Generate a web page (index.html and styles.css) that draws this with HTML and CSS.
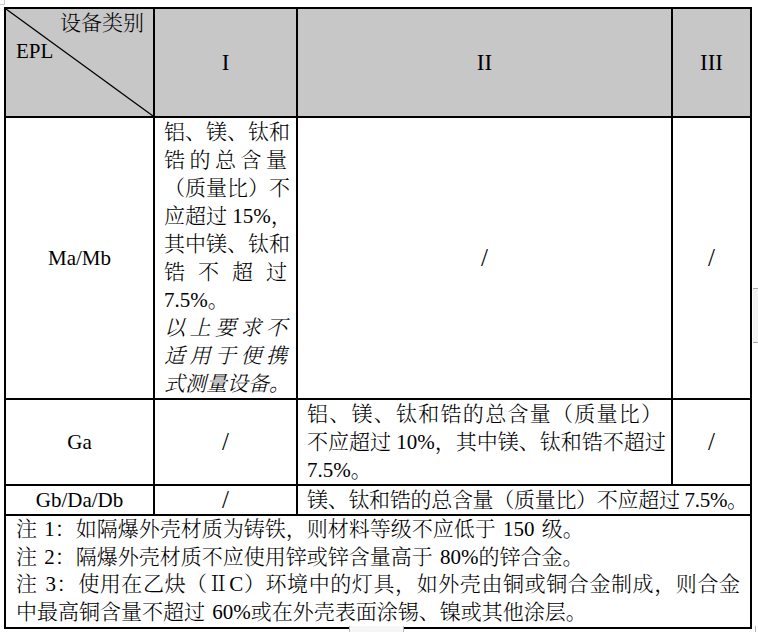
FILE: index.html
```html
<!DOCTYPE html>
<html lang="zh-CN">
<head>
<meta charset="utf-8">
<title>EPL 设备类别 材料要求</title>
<link rel="stylesheet" href="styles.css">
</head>
<body>
<div class="page">
  <table class="spec">
    <colgroup>
      <col class="c1"><col class="c2"><col class="c3"><col class="c4">
    </colgroup>
    <tr class="r-head">
      <th class="diag">
        <svg class="slash" viewBox="0 0 100 100" preserveAspectRatio="none" aria-hidden="true">
          <line x1="0" y1="0" x2="100" y2="100" vector-effect="non-scaling-stroke"></line>
        </svg>
        <div class="dh-top">设备类别</div>
        <div class="dh-bot">EPL</div>
      </th>
      <th class="roman">I</th>
      <th class="roman">II</th>
      <th class="roman">III</th>
    </tr>
    <tr class="r-m">
      <td class="lbl">Ma/Mb</td>
      <td class="txt">
        <span class="ln j">铝、镁、钛和</span>
        <span class="ln j">锆的总含量</span>
        <span class="ln j">（质量比）不</span>
        <span class="ln j">应超过 15%，</span>
        <span class="ln j">其中镁、钛和</span>
        <span class="ln j">锆不超过</span>
        <span class="ln">7.5%。</span>
        <span class="ln j it">以上要求不</span>
        <span class="ln j it">适用于便携</span>
        <span class="ln j it">式测量设备。</span>
      </td>
      <td class="na">/</td>
      <td class="na">/</td>
    </tr>
    <tr class="r-ga">
      <td class="lbl">Ga</td>
      <td class="na">/</td>
      <td class="txt">
        <span class="ln j">铝、镁、钛和锆的总含量（质量比）</span>
        <span class="ln j">不应超过 10%，其中镁、钛和锆不超过</span>
        <span class="ln">7.5%。</span>
      </td>
      <td class="na">/</td>
    </tr>
    <tr class="r-gb">
      <td class="lbl">Gb/Da/Db</td>
      <td class="na">/</td>
      <td class="txt one" colspan="2">镁、钛和锆的总含量（质量比）不应超过 7.5%。</td>
    </tr>
    <tr class="r-note">
      <td class="notes" colspan="4">
        <span class="ln">注 1：如隔爆外壳材质为铸铁，则材料等级不应低于 150 级。</span>
        <span class="ln">注 2：隔爆外壳材质不应使用锌或锌含量高于 80%的锌合金。</span>
        <span class="ln j">注 3：使用在乙炔（ⅡC）环境中的灯具，如外壳由铜或铜合金制成，则合金</span>
        <span class="ln">中最高铜含量不超过 60%或在外壳表面涂锡、镍或其他涂层。</span>
      </td>
    </tr>
  </table>
  <span class="mark mark-tl"></span>
  <span class="mark mark-r"></span>
  <span class="mark mark-b"></span>
  <span class="mark mark-br"></span>
</div>
</body>
</html>
```

FILE: styles.css
```css
html, body {
  margin: 0;
  padding: 0;
  background: #ffffff;
}

.page {
  position: relative;
  width: 758px;
  height: 632px;
  padding: 7px 0 0 4px;
  box-sizing: border-box;
  overflow: hidden;
  font-family: "Liberation Serif", "Noto Serif CJK SC", "Noto Sans CJK SC", serif;
  font-size: 21px;
  font-weight: 300;
  line-height: 28px;
  color: #000;
}

.spec {
  border-collapse: collapse;
  table-layout: fixed;
  width: 748px;
}

.c1 { width: 149px; }
.c2 { width: 143px; }
.c3 { width: 375px; }
.c4 { width: 79px; }

.spec th,
.spec td {
  border: 2px solid #000;
  padding: 0 9px;
  font-weight: 300;
}

.r-head { height: 109px; }
.r-m { height: 282px; }
.r-ga { height: 85px; }
.r-gb { height: 29px; }
.r-note { height: 113px; }

.r-head th {
  background: #c7c7c7;
  vertical-align: middle;
  text-align: center;
}

.r-head th.diag {
  position: relative;
  vertical-align: top;
}

.slash {
  position: absolute;
  left: 0;
  top: 0;
  width: 100%;
  height: 100%;
  overflow: visible;
}

.slash line {
  stroke: #000;
  stroke-width: 1.3;
}

.dh-top {
  position: relative;
  text-align: right;
}

.dh-bot {
  position: relative;
  text-align: left;
  padding-left: 1px;
}

.roman {
  font-size: 23px;
}

.lbl {
  text-align: center;
  vertical-align: middle;
}

.na {
  text-align: center;
  vertical-align: middle;
  font-size: 25px;
}

.txt {
  vertical-align: top;
  text-align: left;
}

.spec td.txt.one {
  vertical-align: middle;
  white-space: nowrap;
  letter-spacing: -0.3px;
  padding-right: 0;
}

.ln {
  display: block;
  white-space: nowrap;
}

.ln.j {
  text-align: justify;
  text-align-last: justify;
}

.it {
  font-style: italic;
}

.spec td.notes {
  vertical-align: top;
  line-height: 27.5px;
  padding: 0 10px;
  word-spacing: 2px;
}

.mark {
  position: absolute;
  box-sizing: border-box;
}

.mark-tl {
  left: 0;
  top: 0;
  width: 5px;
  height: 5px;
  border-right: 1px solid #c9c9c9;
  border-bottom: 1px solid #c9c9c9;
}

.mark-r {
  left: 753px;
  top: 288px;
  width: 5px;
  height: 55px;
  background: #f3f3f3;
  border-top: 1px solid #a8a8a8;
  border-bottom: 1px solid #a8a8a8;
}

.mark-b {
  left: 349px;
  top: 626px;
  width: 55px;
  height: 6px;
  background: #f6f6f6;
  border-left: 1px solid #b5b5b5;
  border-right: 1px solid #b5b5b5;
}

.mark-br {
  left: 755px;
  top: 626px;
  width: 3px;
  height: 6px;
  border-left: 1px solid #b5b5b5;
}
```
